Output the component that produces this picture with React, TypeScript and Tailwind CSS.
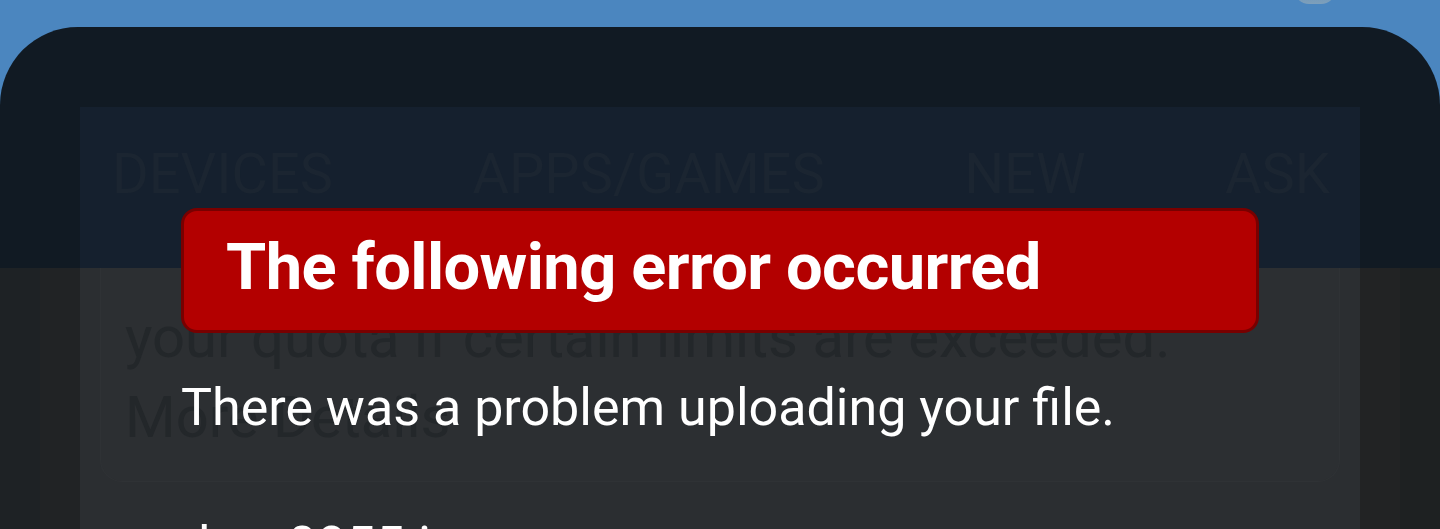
export default function App() {
  return (
    <div className="relative w-[1440px] h-[529px] overflow-hidden bg-[#4B86BF] font-['Roboto',sans-serif]">
      {/* bit of an avatar peeking in at the top */}
      <div className="absolute left-[1294px] top-[-26px] w-[42px] h-[30px] rounded-full bg-gradient-to-b from-[#5a8ab2] to-[#9fb0b8] opacity-60" />

      <div className="h-[27px]" />

      {/* device frame / page behind the dialog */}
      <div className="rounded-t-[78px] bg-[#111A23] pt-[80px]">
        <div className="mx-[80px] h-[161px] bg-[#15202E] flex items-start justify-between px-[32px] pt-[35px] text-[56px] leading-[64px] text-[#1B2531]">
          <span>DEVICES</span>
          <span>APPS/GAMES</span>
          <span>NEW</span>
          <span className="mr-[-2px]">ASK</span>
        </div>

        <div className="flex h-[261px]">
          <div className="w-[40px] bg-[#1E2225]" />
          <div className="w-[40px] bg-[#212325]" />
          <div className="flex-1 bg-[#2B2E31] px-[20px]">
            <div className="h-[214px] rounded-b-[22px] border-x border-b border-[#2F3235] bg-[#2C2F32] px-[24px] pt-[29px] text-[58px] leading-[80px] text-[#23272A]">
              <p className="whitespace-nowrap">your quota if certain limits are exceeded.</p>
              <p>More Details</p>
            </div>
          </div>
          <div className="w-[40px] bg-[#222324]" />
          <div className="w-[40px] bg-[#1E2122]" />
        </div>
      </div>

      {/* error dialog */}
      <div className="absolute left-[181px] top-[208px] w-[1078px]">
        <div className="h-[125px] rounded-[16px] border-[3px] border-[#780000] bg-[#B30000] pl-[42px] flex items-center">
          <h1 className="text-[65px] font-bold tracking-[-0.6px] text-white leading-none pb-[6px]">
            The following error occurred
          </h1>
        </div>
        <p className="mt-[43px] text-[52px] leading-[64px] text-white whitespace-nowrap">
          There was a problem uploading your file.
        </p>
        <p className="mt-[74px] text-[52px] leading-[64px] text-white">dsc_0855.jpg</p>
      </div>
    </div>
  );
}
